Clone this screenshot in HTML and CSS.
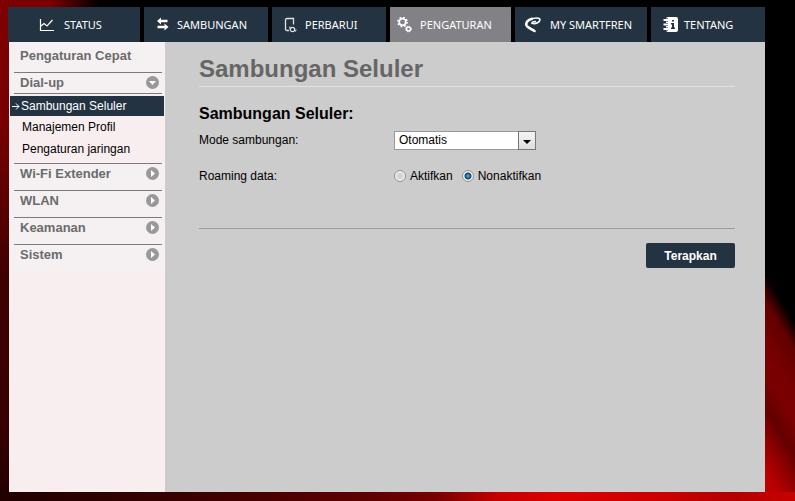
FILE: index.html
```html
<!DOCTYPE html>
<html lang="id">
<head>
<meta charset="utf-8">
<title>Sambungan Seluler</title>
<link rel="stylesheet" href="styles.css">
</head>
<body>
<div class="page">
  <nav class="tabs">
    <a class="tab tab-status" href="#">
      <svg class="tab-icon" width="16" height="16" viewBox="0 0 16 16" fill="none" stroke="#fff"><path d="M1.500 2v11.500H15M2 9l3-2.500 3 2.500 5.500-6" stroke-width="1.200"/></svg>
      <span>STATUS</span>
    </a>
    <a class="tab tab-conn" href="#">
      <svg class="tab-icon" width="16" height="16" viewBox="0 0 16 16" fill="#fff"><path d="M1 4L5 .500v2.300h6.500v2.500H5v2.200zM12.500 10l-4 3.500v-2.300H1.500V8.700h7V6.500z"/></svg>
      <span>SAMBUNGAN</span>
    </a>
    <a class="tab tab-update" href="#">
      <svg class="tab-icon" width="16" height="16" viewBox="0 0 16 16" fill="none" stroke="#dfe3e7"><path d="M5 13.500H3Q1.500 13.500 1.500 12V3Q1.500 1.500 3 1.500h6.500v6" stroke-width="1.300"/><circle cx="8.500" cy="12.500" r="2.200" stroke-width="1.200"/><path d="M6 9.500l-.5 2M11.500 14.500l.5-2"/></svg>
      <span>PERBARUI</span>
    </a>
    <a class="tab tab-settings active" href="#" aria-current="page">
      <svg class="tab-icon" width="16" height="16" viewBox="0 0 16 16" fill="none" stroke="#fff"><circle cx="6.500" cy="5" r="3.300" stroke-width="1.700"/><circle cx="6.500" cy="5" r="4.600" stroke-width="1.600" stroke-dasharray="1.810 1.800"/><circle cx="12.500" cy="12" r="2" stroke-width="1.500"/><circle cx="12.500" cy="12" r="2.900" stroke-dasharray="1.200 1.080"/></svg>
      <span>PENGATURAN</span>
    </a>
    <a class="tab tab-my" href="#">
      <svg class="tab-icon" width="18" height="16" viewBox="0 0 18 16" fill="none" stroke="#fff" stroke-linecap="round" stroke-linejoin="round"><path d="M8 5.500Q9 4.500 11.500 4.500" stroke-width="1.300"/><path d="M8 6.300C12 7.500 16 5 16 2.500 15.500.5 10.500.5 6.500 2.500" stroke-width="1.600"/><path d="M8 1.800C4 3 2.200 5 2.200 7.500c0 2.500 3.300 3.500 8.300 6.500" stroke-width="2.600"/></svg>
      <span>MY SMARTFREN</span>
    </a>
    <a class="tab tab-about" href="#">
      <svg class="tab-icon" width="16" height="16" viewBox="0 0 16 16"><rect x="3" y="0" width="12" height="15" rx="2" fill="#fff"/><path d="M1 3h4M1 7.500h4M1 12h4" stroke="#243342" stroke-width="3"/><path d="M.5 3H5M.5 7.500H5M.5 12H5" stroke="#fff" stroke-width="1.800"/><path d="M9 3h2v1.500H9zM8 6h3v4.500h1V12H8v-1.500h1v-3H8z" fill="#243342"/></svg>
      <span>TENTANG</span>
    </a>
  </nav>
  <div class="panel">
    <aside class="sidebar">
      <div class="menu">
        <a class="group quick" href="#">Pengaturan Cepat</a>
        <a class="group open" href="#"><span>Dial-up</span>
          <svg width="13" height="13" viewBox="0 0 13 13"><circle cx="6.500" cy="6.500" r="6.500" fill="#999"/><path d="M3 5h7L6.500 9z" fill="#fff"/></svg></a>
      </div>
      <ul class="submenu">
        <li><a class="sub current" href="#"><svg width="9" height="7" viewBox="0 0 9 7" fill="none" stroke="#fff"><path d="M1 3.500h7M5 .5l3 3-3 3"/></svg>Sambungan Seluler</a></li>
        <li><a class="sub" href="#">Manajemen Profil</a></li>
        <li><a class="sub" href="#">Pengaturan jaringan</a></li>
      </ul>
      <div class="menu">
        <a class="group" href="#"><span>Wi-Fi Extender</span>
          <svg width="13" height="13" viewBox="0 0 13 13"><circle cx="6.500" cy="6.500" r="6.500" fill="#999"/><path d="M5 3v7l4-3.500z" fill="#fff"/></svg></a>
        <a class="group" href="#"><span>WLAN</span>
          <svg width="13" height="13" viewBox="0 0 13 13"><circle cx="6.500" cy="6.500" r="6.500" fill="#999"/><path d="M5 3v7l4-3.500z" fill="#fff"/></svg></a>
        <a class="group" href="#"><span>Keamanan</span>
          <svg width="13" height="13" viewBox="0 0 13 13"><circle cx="6.500" cy="6.500" r="6.500" fill="#999"/><path d="M5 3v7l4-3.500z" fill="#fff"/></svg></a>
        <a class="group" href="#"><span>Sistem</span>
          <svg width="13" height="13" viewBox="0 0 13 13"><circle cx="6.500" cy="6.500" r="6.500" fill="#999"/><path d="M5 3v7l4-3.500z" fill="#fff"/></svg></a>
      </div>
    </aside>
    <main class="content">
      <h1>Sambungan Seluler</h1>
      <form>
        <h2>Sambungan Seluler:</h2>
        <div class="row">
          <label class="name" for="mode">Mode sambungan:</label>
          <span class="select-box">
            <select id="mode"><option>Otomatis</option><option>Manual</option></select>
          </span>
        </div>
        <div class="row" role="radiogroup" aria-labelledby="roaming">
          <span class="name" id="roaming">Roaming data:</span>
          <label class="choice"><input type="radio" name="roaming">Aktifkan</label>
          <label class="choice"><input type="radio" name="roaming" checked>Nonaktifkan</label>
        </div>
        <div class="actions"><button type="button">Terapkan</button></div>
      </form>
    </main>
  </div>
</div>
</body>
</html>
```
FILE: styles.css
```css
*, *::before, *::after { box-sizing: border-box; }

body {
  margin: 0;
  min-height: 100vh;
  font: 12px/16px "Liberation Sans", Arial, sans-serif;
  color: #000;
  background:
    linear-gradient(90deg, #200000 0, #3c0000 25%, #600000 47%, #780000 55%, #c80000 63%, #dc0000 70%, #cc0000 84%, #b40000 92%, #c80000 100%) 0 100% / 100% 9px no-repeat,
    linear-gradient(#800000 0, #780000 25%, #400000 55%, #380000 85%, #200000 100%) 0 0 / 9px 100% no-repeat,
    linear-gradient(59deg, #c00000 0, #b80000 11%, #8c0000 24%, #640000 34%, #7a0000 46%, #780000 58%, #600000 73%, #000 83%) 100% 100% / 30px 225px no-repeat,
    linear-gradient(90deg, #7d0000 0, #7d0000 50px, #000 100px) 0 0 / 100% 42px no-repeat,
    #000;
}

a { color: inherit; text-decoration: none; }

.page {
  display: flex;
  flex-direction: column;
  min-height: 100vh;
  padding: 7px 30px 9px 8px;
}

.tabs {
  display: grid;
  grid-template-columns: 132fr 124fr 114fr 121fr 132fr 114fr;
  gap: 4px;
}

.tab {
  display: flex;
  align-items: center;
  gap: 5px;
  height: 35px;
  padding-left: 12px;
  background: #243342;
  color: #fff;
  font: 11px/16px "Noto Sans", "Open Sans", sans-serif;
  white-space: nowrap;
}

.tab-status { padding-left: 31px; gap: 9px; }
.tab.active { padding-left: 6px; gap: 8px; background: #828186; }
.tab-my { padding-left: 9px; gap: 8px; }
.tab-icon { flex: none; }

.panel {
  display: flex;
  flex: 1;
  margin-left: 1px;
  background: #ccc;
}

.sidebar {
  flex: none;
  width: 156px;
  background: #f8eef0;
}

.menu { padding: 0 3px 0 5px; background: #f5f1f3; }

.group {
  display: flex;
  justify-content: space-between;
  height: 27px;
  padding: 2px 3px 0 6px;
  border-top: 1px solid #7d7a7d;
  color: #6b6b6b;
  font-size: 13px;
  font-weight: bold;
}

.group svg { margin-top: 1px; }
.group.quick { height: 30px; padding-top: 6px; border-top: 0; }
.group.open { height: 22px; border-bottom: 1px solid #7d7a7d; }

.submenu {
  margin: 0;
  padding: 2px 1px 3px;
  list-style: none;
}

.sub {
  display: block;
  padding: 3px 0 3px 12px;
}

.sub.current {
  display: flex;
  align-items: center;
  gap: 1px;
  padding: 2px 1px;
  background: #243342;
  color: #fff;
}

.content { flex: 1; padding: 12px 30px 24px 34px; }

h1 {
  margin: 0 0 17px;
  padding-bottom: 3px;
  border-bottom: 1px solid #e2e2e2;
  color: #666;
  font-size: 24px;
  line-height: 29px;
}

h2 { margin: 0 0 6px; font-size: 16px; line-height: 20px; }

.row { display: flex; align-items: center; height: 20px; margin-bottom: 16px; }
.name { width: 195px; }

.select-box { position: relative; width: 142px; }

.select-box::before {
  content: "";
  position: absolute;
  top: 0;
  right: 0;
  width: 18px;
  height: 19px;
  border: 1px solid #777;
  background: linear-gradient(#f4f4f4, #ddd);
  pointer-events: none;
}

.select-box::after {
  content: "";
  position: absolute;
  top: 9px;
  right: 5px;
  border: 4px solid transparent;
  border-top-color: #000;
  border-bottom: 0;
  pointer-events: none;
}

select {
  display: block;
  width: 100%;
  height: 19px;
  padding: 0 20px 2px 4px;
  border: 1px solid #999;
  border-radius: 0;
  appearance: none;
  background: #fff;
  color: #000;
  font: inherit;
}

.choice { display: flex; align-items: center; gap: 4px; margin-right: 9px; }

input[type="radio"] {
  width: 12px;
  height: 12px;
  margin: 0;
  border: 1px solid #929292;
  border-radius: 50%;
  appearance: none;
  background: radial-gradient(#d4d4d4 30%, #f8f8f8 75%);
}

input[type="radio"]:checked {
  background: radial-gradient(circle at 50% 50%, #58b4dc 0, #0f4470 3px, #f4f4f4 4px);
}

.actions {
  display: flex;
  justify-content: flex-end;
  margin-top: 42px;
  padding-top: 14px;
  border-top: 1px solid #9c9c9c;
}

button {
  width: 89px;
  height: 25px;
  border: 0;
  border-radius: 2px;
  background: #243342;
  color: #fff;
  font: bold 12px/16px "Liberation Sans", Arial, sans-serif;
}
```
